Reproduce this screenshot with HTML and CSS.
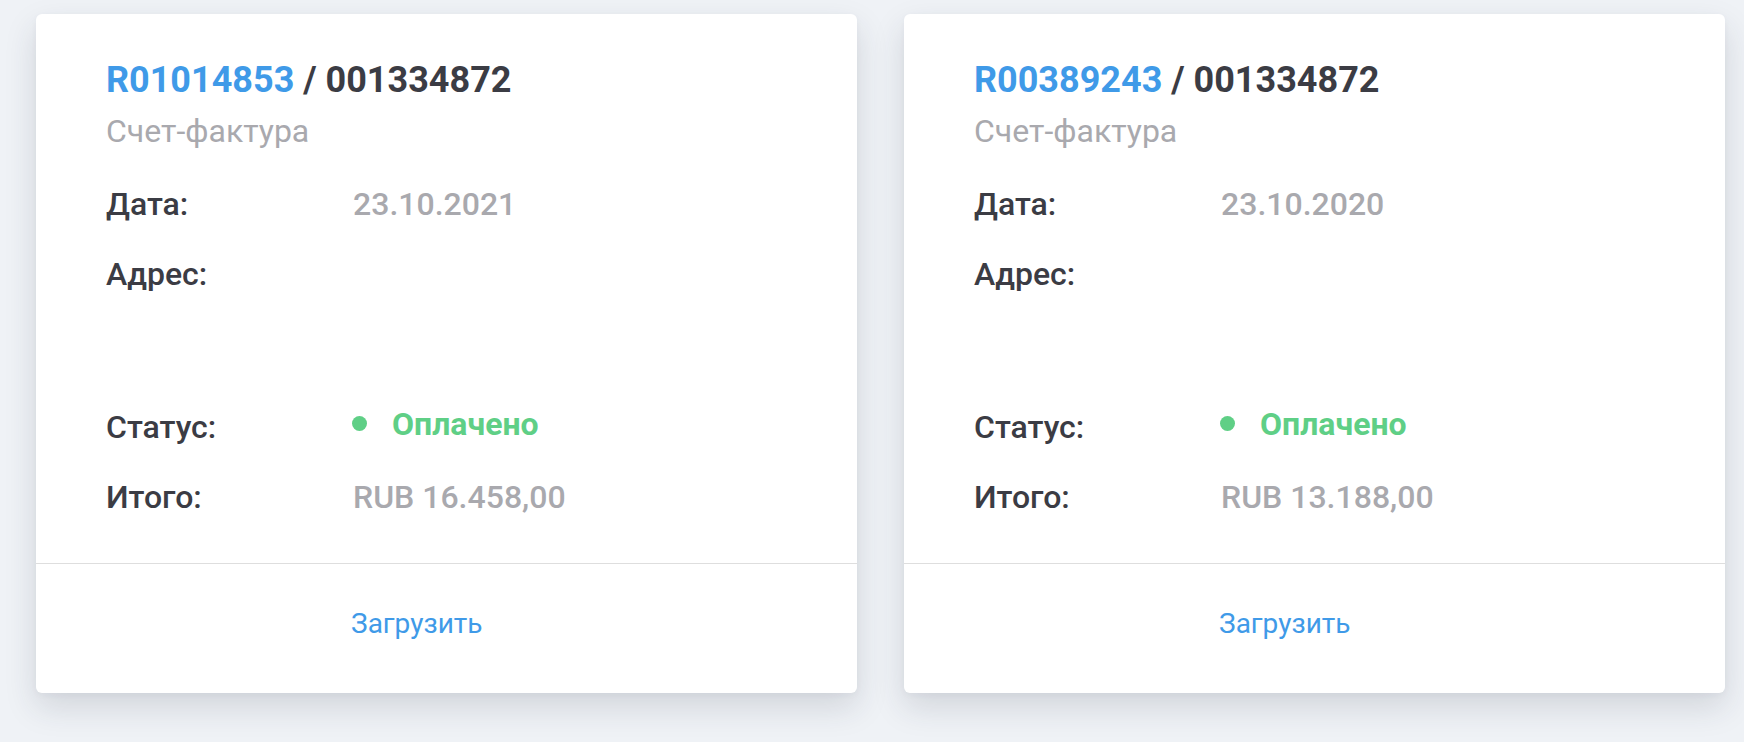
FILE: index.html
```html
<!DOCTYPE html>
<html lang="ru">
<head>
<meta charset="utf-8">
<title>Счета</title>
<link rel="stylesheet" href="styles.css">
</head>
<body>
<div class="grid">
  <div class="card">
    <div class="card-body">
      <div class="title"><span class="num">R01014853</span> / 001334872</div>
      <div class="subtitle">Счет-фактура</div>
      <div class="rows">
        <div class="row"><div class="label">Дата:</div><div class="value">23.10.2021</div></div>
        <div class="row row-address"><div class="label">Адрес:</div><div class="value"></div></div>
        <div class="row"><div class="label">Статус:</div><div class="value status"><span class="dot"></span>Оплачено</div></div>
        <div class="row"><div class="label">Итого:</div><div class="value">RUB 16.458,00</div></div>
      </div>
    </div>
    <div class="card-footer"><a class="download" href="#">Загрузить</a></div>
  </div>
  <div class="card">
    <div class="card-body">
      <div class="title"><span class="num">R00389243</span> / 001334872</div>
      <div class="subtitle">Счет-фактура</div>
      <div class="rows">
        <div class="row"><div class="label">Дата:</div><div class="value">23.10.2020</div></div>
        <div class="row row-address"><div class="label">Адрес:</div><div class="value"></div></div>
        <div class="row"><div class="label">Статус:</div><div class="value status"><span class="dot"></span>Оплачено</div></div>
        <div class="row"><div class="label">Итого:</div><div class="value">RUB 13.188,00</div></div>
      </div>
    </div>
    <div class="card-footer"><a class="download" href="#">Загрузить</a></div>
  </div>
</div>
</body>
</html>
```
FILE: styles.css
```css
html, body {
  margin: 0;
  padding: 0;
  background: #eff2f6;
  font-family: Roboto, "Liberation Sans", sans-serif;
  height: 742px;
  overflow: hidden;
}
.grid {
  display: grid;
  grid-template-columns: 1fr 1fr;
  gap: 47px;
  padding: 14px 19px 0 36px;
}
.card {
  background: #fff;
  border-radius: 6px;
  box-shadow: 0 14px 32px rgba(40, 50, 70, 0.15), 0 2px 6px rgba(40, 50, 70, 0.04);
  display: flex;
  flex-direction: column;
}
.card-body {
  padding: 45px 40px 46px 70px;
  border-bottom: 1px solid #dedede;
}
.title {
  font-size: 36px;
  line-height: 43px;
  font-weight: 700;
  color: #3b3c44;
}
.num {
  color: #3f9ae8;
}
.subtitle {
  margin-top: 9px;
  font-size: 32px;
  line-height: 40px;
  color: #a9a9ae;
}
.rows {
  margin-top: 33px;
  display: flex;
  flex-direction: column;
  gap: 30px;
}
.row {
  display: grid;
  grid-template-columns: 247px 1fr;
  font-size: 32px;
  line-height: 40px;
  font-weight: 500;
}
.row-address {
  min-height: 123px;
}
.label {
  color: #3b3c44;
}
.value {
  color: #a9a9ae;
}
.status {
  color: #5fcf86;
  font-weight: 700;
  display: flex;
  align-items: center;
  margin-top: -7px;
}
.dot {
  width: 15px;
  height: 15px;
  border-radius: 50%;
  background: #5fcf86;
  margin-left: -1px;
  margin-right: 25px;
}
.card-footer {
  padding: 43px 0 52px 315px;
}
.download {
  font-size: 28px;
  line-height: 34px;
  color: #3f9ae8;
  text-decoration: none;
  display: inline-block;
}
```
